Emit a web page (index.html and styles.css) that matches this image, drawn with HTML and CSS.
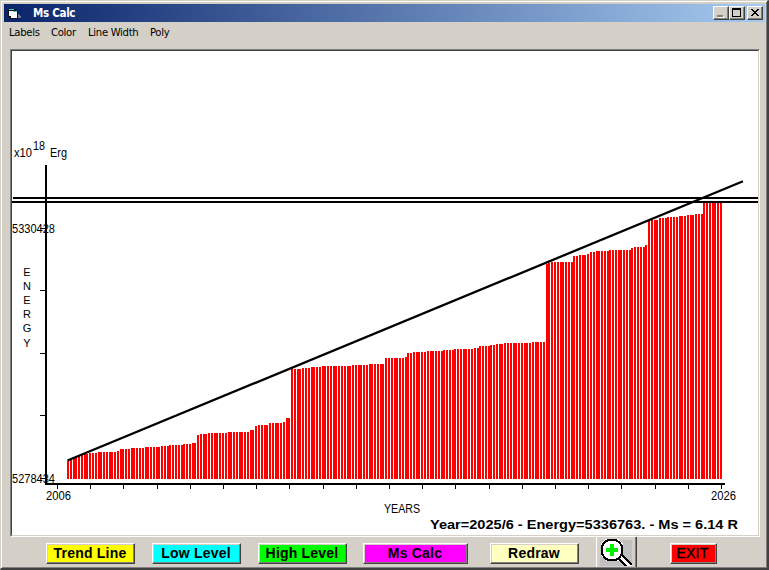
FILE: index.html
```html
<!DOCTYPE html>
<html>
  <head>
    <meta charset="utf-8" />
    <title>Ms Calc</title>
    <link rel="stylesheet" href="styles.css">
  </head>
  <body>
    <div class="window">
      <div class="titlebar">
        <svg class="app-icon" width="16" height="16" shape-rendering="crispEdges">
          <path d="M1 4h8v2h2v8H3v-2H1z" fill="#111" />
          <path d="M2 6h5v1h3v6H4v-2H2z" fill="#fff" />
          <path d="M2 4h5v1H2zM6 6h4v1H6z" fill="#35dcdc" />
          <path d="M11 9l3 2v2h-3z" fill="#6c7c9c" />
        </svg>
        <span class="title">Ms Calc</span>
        <div class="controls">
          <button class="ctl">
            <svg width="14" height="12" shape-rendering="crispEdges">
              <path d="M4 9h6v2H4z" fill="#fff" />
              <path d="M3 8h6v2H3z" fill="#808080" />
            </svg>
          </button>
          <button class="ctl">
            <svg width="14" height="12" shape-rendering="crispEdges">
              <path d="M2 1h9v9H2zM3 3v6h7V3z" fill="#000" fill-rule="evenodd" />
            </svg>
          </button>
          <button class="ctl close">
            <svg width="14" height="12" shape-rendering="crispEdges">
              <path d="M3 2h2v1h1v1h2V3h1V2h2v1h-1v1H9v1H8v1h1v1h1v1h1v1H9V8H8V7H6v1H5v1H3V8h1V7h1V6h1V5H5V4H4V3H3z" fill="#000" />
            </svg>
          </button>
        </div>
      </div>

      <div class="menu">
        <span class="m-labels">Labels</span>
        <span class="m-color">Color</span>
        <span class="m-width">Line Width</span>
        <span class="m-poly">Poly</span>
      </div>

      <div class="picture">
        <svg class="chart" viewBox="12 51 746 484" width="746" height="484">
          <g id="bars" class="bars"></g>
          <g class="lines">
            <path d="M45 165h2v320h-2zM45 483h680v2H45z" />
            <path d="M13 197h745v2H13zM12 201h746v2H12z" />
            <path d="M40 228h5v1h-5zM40 290h5v1h-5zM40 353h5v1h-5zM40 415h5v1h-5zM40 478h5v1h-5z" />
          </g>
          <g id="ticks" class="lines"></g>
          <line class="trend" x1="67.5" y1="460.5" x2="743" y2="181.3" />
          <g class="labels">
            <text x="14" y="157" textLength="18" lengthAdjust="spacingAndGlyphs">x10</text>
            <text x="33" y="150" textLength="12" lengthAdjust="spacingAndGlyphs">18</text>
            <text x="50" y="157" textLength="17" lengthAdjust="spacingAndGlyphs">Erg</text>
            <text x="12" y="233" textLength="43" lengthAdjust="spacingAndGlyphs">5330428</text>
            <text x="12" y="483" textLength="43" lengthAdjust="spacingAndGlyphs">5278434</text>
            <text x="46" y="500" textLength="25" lengthAdjust="spacingAndGlyphs">2006</text>
            <text x="711" y="500" textLength="25" lengthAdjust="spacingAndGlyphs">2026</text>
            <text x="384" y="513" textLength="36" lengthAdjust="spacingAndGlyphs">YEARS</text>
          </g>
          <g class="labels vertical">
            <text x="27" y="276">E</text>
            <text x="27" y="290">N</text>
            <text x="27" y="304">E</text>
            <text x="27" y="318">R</text>
            <text x="27" y="332">G</text>
            <text x="27" y="347">Y</text>
          </g>
          <text class="status" x="430" y="529" textLength="308" lengthAdjust="spacingAndGlyphs">Year=2025/6 - Energy=5336763. - Ms = 6.14 R</text>
        </svg>
      </div>

      <div class="buttons">
        <button class="btn trend-line"><span>Trend Line</span></button>
        <button class="btn low"><span>Low Level</span></button>
        <button class="btn high"><span>High Level</span></button>
        <button class="btn calc"><span>Ms Calc</span></button>
        <button class="btn redraw"><span>Redraw</span></button>
        <div class="zoom">
          <svg width="34" height="29" shape-rendering="crispEdges">
            <path d="M2 6l5-4h12l5 5v13l-4 4H7l-5-6z" fill="#fff" />
            <path d="M18 20l4-4 11 10v4h-6z" fill="#fff" />
            <path d="M18 20L28 30M22 17L33 28" stroke="#000" stroke-width="2" fill="none" />
            <circle cx="13" cy="13" r="10.5" fill="#fff" stroke="#000" stroke-width="2" />
            <path d="M11 7h4v4h4v4h-4v4h-4v-4H7v-4h4z" fill="#00f000" />
          </svg>
        </div>
        <button class="btn exit"><span>EXIT</span></button>
      </div>
    </div>

    <script>
      var ns = "http://www.w3.org/2000/svg";
      var left = 57;
      var month = 664 / 240;
      var base = 479;
      /*[first x, top y] of each level*/
      var levels = [
        [67, 461], [70, 459], [72, 458], [75, 457], [78, 456], [81, 455], [84, 454],
        [89, 453], [97, 452], [117, 451], [120, 449], [131, 448], [144, 447],
        [161, 446], [169, 445], [183, 444], [192, 443], [197, 435], [200, 434],
        [208, 433], [228, 432], [250, 430], [255, 426], [258, 425], [269, 423],
        [283, 422], [286, 418], [291, 369], [302, 368], [311, 367], [322, 366],
        [352, 365], [369, 364], [385, 358], [405, 357], [408, 353], [413, 352],
        [427, 351], [444, 350], [455, 349], [474, 348], [480, 346], [491, 345],
        [496, 344], [504, 343], [532, 342], [546, 264], [549, 263], [552, 262],
        [574, 256], [579, 255], [588, 254], [590, 252], [596, 251], [610, 250],
        [632, 248], [635, 247], [646, 245], [648, 221], [651, 220], [660, 218],
        [668, 217], [679, 216], [687, 215], [694, 214], [704, 203],
      ];

      function rect(parent, x, y, w, h) {
        var r = document.createElementNS(ns, "rect");
        r.setAttribute("x", x);
        r.setAttribute("y", y);
        r.setAttribute("width", w);
        r.setAttribute("height", h);
        parent.appendChild(r);
      }

      var i, j, x, barTop;
      var bars = document.getElementById("bars");
      var ticks = document.getElementById("ticks");
      /*one bar for each month*/
      for (i = 4; i <= 240; i++) {
        x = Math.round(left + i * month) - 1;
        for (j = 0; j < levels.length && levels[j][0] <= x + 1; j++) {
          barTop = levels[j][1];
        }
        rect(bars, x, barTop, 2, base - barTop);
      }
      /*one tick for each year*/
      for (i = 0; i <= 20; i++) {
        rect(ticks, Math.round(left + i * 12 * month), 485, 1, 4);
      }
    </script>
  </body>
</html>
```
FILE: styles.css
```css
* {
  box-sizing: border-box;
}
body {
  margin: 0;
  background: #d4d0c8;
  overflow: hidden;
}

.window {
  width: 769px;
  height: 570px;
  padding: 2px;
  background: #d4d0c8;
  border: 1px solid #d4d0c8;
  border-right: 2px solid #404040;
  border-bottom: 2px solid #404040;
  box-shadow: inset 1px 1px #fff, inset -1px -1px #808080;
  font-family: "DejaVu Sans Condensed", "DejaVu Sans", sans-serif;
  font-size: 11px;
  color: #000;
}

.titlebar {
  display: flex;
  align-items: center;
  height: 18px;
  margin: 1px 0 0 1px;
  padding: 0 2px 0 3px;
  background: linear-gradient(to right, #0a246a, #a6caf0);
}
.title {
  margin-left: 10px;
  color: #fff;
  font-size: 11.5px;
  font-weight: bold;
  letter-spacing: -0.3px;
}
.controls {
  display: flex;
  margin-left: auto;
}
.ctl {
  width: 16px;
  height: 14px;
  padding: 0;
  background: #d4d0c8;
  border: 1px solid;
  border-color: #fff #404040 #404040 #fff;
  box-shadow: inset -1px -1px #808080;
}
.ctl svg {
  display: block;
}
.close {
  margin-left: 2px;
}

.menu {
  display: flex;
  height: 27px;
  padding: 4px 0 0 6px;
  line-height: 14px;
  white-space: nowrap;
}
.m-labels {
  width: 42px;
}
.m-color {
  width: 37px;
}
.m-width {
  width: 62px;
}
.menu span {
  font-size: 11.2px;
  letter-spacing: -0.3px;
}

/*sunken box that holds the chart*/
.picture {
  width: 750px;
  height: 488px;
  margin-left: 7px;
  background: #fff;
  border: 1px solid;
  border-color: #808080 #fff #fff #808080;
}
.chart {
  display: block;
  width: 748px;
  height: 486px;
  border: 1px solid;
  border-color: #404040 #d4d0c8 #d4d0c8 #404040;
}
.bars {
  fill: #f00;
  shape-rendering: crispEdges;
}
.lines {
  fill: #000;
  shape-rendering: crispEdges;
}
.trend {
  stroke: #000;
  stroke-width: 2.3;
}
.labels {
  font-family: "Liberation Sans", sans-serif;
  font-size: 12.5px;
}
.vertical {
  text-anchor: middle;
  font-size: 11px;
}
.status {
  font-family: "Liberation Sans", sans-serif;
  font-size: 13.5px;
  font-weight: bold;
}

.buttons {
  display: flex;
  height: 30px;
  padding-left: 43px;
}
.btn {
  width: 89px;
  height: 21px;
  margin: 6px 17px 0 0;
  padding: 0 1px 2px 0;
  border: 1px solid;
  border-color: #fff #404040 #404040 #fff;
  box-shadow: inset -1px -1px #808080, inset 1px 1px #d4d0c8;
  font-family: "Liberation Sans", sans-serif;
  font-size: 14px;
  font-weight: bold;
  line-height: 16px;
  letter-spacing: 0.2px;
  white-space: nowrap;
  color: #000;
}
.trend-line {
  background: #ff0;
}
.low {
  background: #0ff;
}
.high {
  background: #0f0;
  margin-right: 16px;
}
.calc {
  background: #f0f;
  width: 105px;
  margin-right: 22px;
}
.redraw {
  background: #ffffc0;
}
.zoom {
  width: 41px;
  height: 30px;
  margin-right: 33px;
  padding-left: 2px;
  background: linear-gradient(#c0c0c0, #c0c0c0) 3px 3px / 32px 26px no-repeat;
  border-left: 1px solid #fff;
  border-right: 1px solid #404040;
  box-shadow: inset -1px 0 #808080;
}
.exit {
  background: #f00;
  width: 47px;
  margin-right: 0;
  padding-right: 2px;
  font-weight: normal;
  -webkit-text-stroke: 0.4px #000;
}
```
